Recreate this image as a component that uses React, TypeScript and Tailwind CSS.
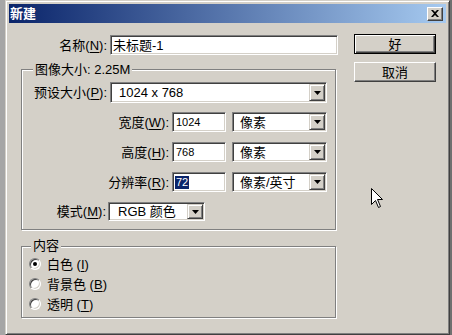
import React from "react";

const sunken =
  "bg-white border border-t-[#808080] border-l-[#808080] border-r-white border-b-white shadow-[inset_1px_1px_0_#404040,inset_-1px_-1px_0_#d4d0c8]";

function ArrowBtn() {
  return (
    <div className="w-[16px] h-full shrink-0 flex items-center justify-center bg-[#d4d0c8] border border-t-[#d4d0c8] border-l-[#d4d0c8] border-r-[#404040] border-b-[#404040] shadow-[inset_1px_1px_0_#fff,inset_-1px_-1px_0_#808080]">
      <svg width="7" height="4" viewBox="0 0 7 4">
        <path d="M0 0h7L3.5 4z" fill="#000" />
      </svg>
    </div>
  );
}

function Select({ className, textClass, children }: { className: string; textClass: string; children: React.ReactNode }) {
  return (
    <div className={`${sunken} ${className} p-[1px] flex items-stretch`}>
      <div className={`flex-1 flex items-center whitespace-nowrap overflow-hidden ${textClass}`}>{children}</div>
      <ArrowBtn />
    </div>
  );
}

function Label({ className, children }: { className: string; children: React.ReactNode }) {
  return <div className={`${className} text-right whitespace-nowrap text-[13px] leading-none`}>{children}</div>;
}

function U({ children }: { children: React.ReactNode }) {
  return <span className="underline underline-offset-[2px]">{children}</span>;
}

function Radio({ checked, children }: { checked?: boolean; children: React.ReactNode }) {
  return (
    <div className="h-[20px] flex items-center pl-[7px]">
      <div className="w-[12px] h-[12px] rounded-full bg-white border border-t-[#808080] border-l-[#808080] border-r-white border-b-white shadow-[inset_1px_1px_0_#404040,inset_-1px_-1px_0_#d4d0c8] flex items-center justify-center">
        {checked && <div className="w-[4px] h-[4px] rounded-full bg-black" />}
      </div>
      <div className="ml-[6px] text-[13px] leading-none whitespace-nowrap">{children}</div>
    </div>
  );
}

export default function App() {
  return (
    <div className="relative w-[452px] h-[335px] overflow-hidden flex bg-[#d4d0c8] text-black font-['Liberation_Sans','Noto_Sans_CJK_SC',sans-serif]">
      <div className="w-[5px] h-full bg-[#a6a6a6]" />
      <div className="w-[445px] h-full flex flex-col p-[3px] bg-[#d4d0c8] border border-t-[#d4d0c8] border-l-[#d4d0c8] border-r-[#404040] border-b-[#404040] shadow-[inset_1px_1px_0_#fff,inset_-1px_-1px_0_#808080]">
        {/* Title bar */}
        <div className="h-[19px] flex items-center bg-[linear-gradient(to_right,#0a246a,#a6caf0)]">
          <div className="pl-[1px] text-white font-bold text-[13px] leading-none">新建</div>
          <div className="flex-1" />
          <div className="mr-[3px] w-[16px] h-[14px] flex items-center justify-center bg-[#d4d0c8] border border-t-white border-l-white border-r-[#404040] border-b-[#404040] shadow-[inset_-1px_-1px_0_#808080]">
            <svg width="8" height="7" viewBox="0 0 8 7">
              <path d="M0 0h2l2 2 2-2h2L5 3.5 8 7H6L4 5 2 7H0l3-3.5z" fill="#000" />
            </svg>
          </div>
        </div>

        {/* Body */}
        <div className="flex pt-[11px] pl-[12px]">
          <div className="w-[317px] flex flex-col">
            {/* Name row */}
            <div className="mt-[1px] h-[20px] flex items-center">
              <Label className="w-[86px]">
                名称(<U>N</U>):
              </Label>
              <div className={`${sunken} ml-[3px] w-[228px] h-[20px] flex items-center pl-[2px] text-[13px] leading-none`}>
                未标题-1
              </div>
            </div>

            {/* Image size group */}
            <div className="relative mt-[14px] w-[315px] h-[161px] border border-[#808080] shadow-[inset_1px_1px_0_#fff,1px_1px_0_#fff] flex flex-col">
              <div className="absolute -top-[7px] left-[11px] px-[2px] bg-[#d4d0c8] text-[13px] leading-[14px] whitespace-nowrap">
                图像大小: 2.25M
              </div>

              <div className="mt-[12px] h-[21px] flex items-center">
                <Label className="w-[85px]">
                  预设大小(<U>P</U>):
                </Label>
                <Select className="ml-[3px] w-[217px] h-[21px]" textClass="pl-[7px] text-[13px] leading-none">
                  1024 x 768
                </Select>
              </div>

              <div className="mt-[9px] h-[20px] flex items-center">
                <Label className="w-[147px]">
                  宽度(<U>W</U>):
                </Label>
                <div className={`${sunken} ml-[3px] w-[54px] h-[20px] flex items-center pl-[3px] text-[11px] leading-none`}>1024</div>
                <Select className="ml-[6px] w-[95px] h-[20px]" textClass="pl-[6px] text-[13px] leading-none">
                  像素
                </Select>
              </div>

              <div className="mt-[10px] h-[20px] flex items-center">
                <Label className="w-[147px]">
                  高度(<U>H</U>):
                </Label>
                <div className={`${sunken} ml-[3px] w-[54px] h-[20px] flex items-center pl-[3px] text-[11px] leading-none`}>768</div>
                <Select className="ml-[6px] w-[95px] h-[20px]" textClass="pl-[6px] text-[13px] leading-none">
                  像素
                </Select>
              </div>

              <div className="mt-[10px] h-[20px] flex items-center">
                <Label className="w-[147px]">
                  分辨率(<U>R</U>):
                </Label>
                <div className={`${sunken} ml-[3px] w-[54px] h-[20px] flex items-center pl-[2px] text-[11px] leading-none`}>
                  <span className="bg-[#0a246a] text-white px-[1px] py-[1px]">72</span>
                </div>
                <Select className="ml-[6px] w-[95px] h-[20px]" textClass="pl-[6px] text-[13px] leading-none">
                  像素/英寸
                </Select>
              </div>

              <div className="mt-[10px] h-[19px] flex items-center">
                <Label className="w-[84px]">
                  模式(<U>M</U>):
                </Label>
                <Select className="ml-[2px] w-[97px] h-[19px]" textClass="pl-[8px] text-[13px] leading-none">
                  RGB 颜色
                </Select>
              </div>
            </div>

            {/* Contents group */}
            <div className="relative mt-[16px] w-[315px] h-[72px] border border-[#808080] shadow-[inset_1px_1px_0_#fff,1px_1px_0_#fff] flex flex-col">
              <div className="absolute -top-[8px] left-[9px] px-[2px] bg-[#d4d0c8] text-[13px] leading-[14px] whitespace-nowrap">
                内容
              </div>
              <div className="pt-[7px] flex flex-col">
                <Radio checked>
                  白色 (<U>I</U>)
                </Radio>
                <Radio>
                  背景色 (<U>B</U>)
                </Radio>
                <Radio>
                  透明 (<U>T</U>)
                </Radio>
              </div>
            </div>
          </div>

          {/* Buttons */}
          <div className="ml-[16px] w-[82px] flex flex-col">
            <div className="h-[20px] flex items-center justify-center bg-[#d4d0c8] border border-black shadow-[inset_1px_1px_0_#fff,inset_-1px_-1px_0_#404040,inset_-2px_-2px_0_#808080] text-[13px] leading-none">
              好
            </div>
            <div className="mt-[8px] h-[20px] flex items-center justify-center bg-[#d4d0c8] border border-t-white border-l-white border-r-[#404040] border-b-[#404040] shadow-[inset_-1px_-1px_0_#808080] text-[13px] leading-none">
              取消
            </div>
          </div>
        </div>
      </div>
      <div className="w-[2px] h-full bg-[#707070]" />

      {/* Mouse cursor */}
      <svg className="absolute left-[371px] top-[188px]" width="13" height="20" viewBox="0 0 13 20">
        <path d="M0.5 0.5V16.5L4.5 12.5L7.5 19.5L9.5 18.5L6.5 11.5H11.5Z" fill="#fff" stroke="#000" strokeWidth="1" strokeLinejoin="miter" />
      </svg>
    </div>
  );
}
